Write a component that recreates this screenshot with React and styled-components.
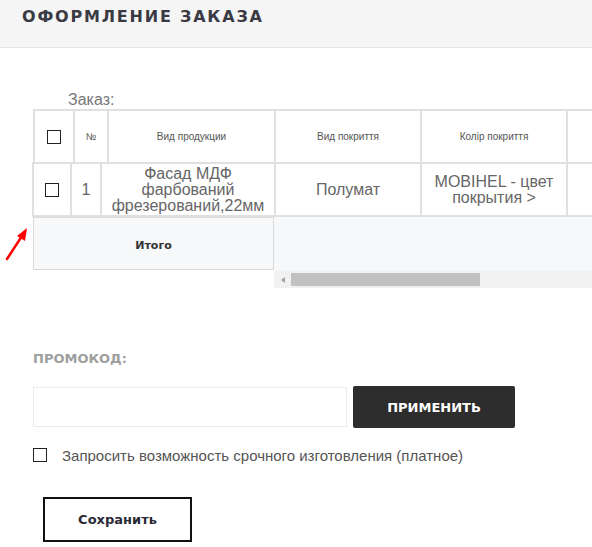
import React from "react";
import styled, { createGlobalStyle } from "styled-components";

const GlobalStyle = createGlobalStyle`
	html, body {
		margin: 0;
		padding: 0;
		background: #fff;
	}
	* {
		box-sizing: border-box;
	}
`;

const Page = styled.div`
	position: relative;
	width: 592px;
	height: 547px;
	overflow: hidden;
	font-family: "Liberation Sans", Arial, sans-serif;
`;

const PageHeader = styled.div`
	height: 48px;
	padding: 1px 22px 0;
	background: #f5f5f5;
	border-bottom: 1px solid #e6e6e6;
	display: flex;
	align-items: flex-start;
`;

const Title = styled.h1`
	margin: 0;
	font-family: "DejaVu Sans", sans-serif;
	font-weight: bold;
	font-size: 16px;
	line-height: 32px;
	letter-spacing: 1.8px;
	color: #3a3a44;
	text-transform: uppercase;
`;

const Content = styled.div`
	padding: 43px 0 0 33px;
`;

const OrderLabel = styled.div`
	margin-left: 35px;
	font-size: 16px;
	line-height: 18px;
	color: #777;
`;

const Row = styled.div`
	display: flex;
	width: max-content;
	border-left: 2px solid #e0e0e0;
	border-top: 2px solid #e0e0e0;
	${({ $body }) => $body && `
		margin-left: -1px;
		border-bottom: 2px solid #e0e0e0;
	`}
`;

const Cell = styled.div`
	width: ${({ $w }) => $w}px;
	height: 51px;
	border-right: 2px solid #e0e0e0;
	display: flex;
	align-items: center;
	justify-content: center;
	text-align: center;
	padding: 0 4px;
	color: ${({ $head }) => ($head ? "#555" : "#666")};
	font-size: ${({ $head }) => ($head ? "10px" : "16px")};
	line-height: ${({ $head }) => ($head ? "12px" : "16px")};
`;

const Box = styled.input.attrs({ type: "checkbox" })`
	appearance: none;
	margin: 0;
	width: 14px;
	height: 14px;
	border: 1px solid #222;
	background: #fff;
	flex-shrink: 0;
`;

const Footer = styled.div`
	display: flex;
	align-items: flex-start;
`;

const TotalCell = styled.div`
	width: 241px;
	height: 53px;
	padding-top: 3px;
	border: 1px solid #d9d9d9;
	background: #f7f8fa;
	display: flex;
	align-items: center;
	justify-content: center;
	font-family: "DejaVu Sans", sans-serif;
	font-weight: bold;
	font-size: 11px;
	color: #333;
`;

const ScrollArea = styled.div`
	flex: 1;
	display: flex;
	flex-direction: column;
`;

const Fill = styled.div`
	height: 54px;
	background: #f7f8fa;
`;

const Track = styled.div`
	height: 17px;
	background: #f1f1f1;
	display: flex;
	align-items: center;
`;

const ArrowButton = styled.div`
	width: 17px;
	display: flex;
	justify-content: center;
	&::before {
		content: "";
		border-top: 3.5px solid transparent;
		border-bottom: 3.5px solid transparent;
		border-right: 4px solid #a3a3a3;
	}
`;

const Thumb = styled.div`
	width: 189px;
	height: 13px;
	background: #c1c1c1;
`;

const Promo = styled.div`
	margin-top: 62px;
`;

const PromoLabel = styled.div`
	font-family: "DejaVu Sans", sans-serif;
	font-weight: bold;
	font-size: 13px;
	line-height: 18px;
	color: #9e9e9e;
`;

const PromoRow = styled.div`
	display: flex;
	align-items: center;
	gap: 6px;
	margin-top: 18px;
`;

const PromoInput = styled.input`
	width: 314px;
	height: 40px;
	border: 1px solid #eaeaea;
	outline: none;
	padding: 0 10px;
`;

const DarkButton = styled.button`
	width: 162px;
	height: 42px;
	border: none;
	border-radius: 2px;
	background: #2d2d2d;
	color: #fff;
	font-family: "DejaVu Sans", sans-serif;
	font-weight: bold;
	font-size: 13px;
`;

const CheckRow = styled.label`
	display: flex;
	align-items: center;
	gap: 15px;
	margin-top: 17px;
	height: 20px;
	font-size: 15px;
	color: #555;
`;

const SaveButton = styled.button`
	margin: 32px 0 0 10px;
	width: 149px;
	height: 45px;
	border: 2px solid #111;
	background: #fff;
	font-family: "DejaVu Sans", sans-serif;
	font-weight: bold;
	font-size: 13px;
	color: #2a2a35;
`;

const Pointer = styled.svg`
	position: absolute;
	left: 0;
	top: 222px;
`;

const headCols = [40, 34, 167, 146, 146, 120];
const bodyCols = [38, 30, 174, 146, 146, 120];

export default function App() {
	return (
		<Page>
			<GlobalStyle />
			<PageHeader>
				<Title>Оформление заказа</Title>
			</PageHeader>
			<Content>
				<OrderLabel>Заказ:</OrderLabel>
				<Row>
					<Cell $head $w={headCols[0]}><Box /></Cell>
					<Cell $head $w={headCols[1]}>№</Cell>
					<Cell $head $w={headCols[2]}>Вид продукции</Cell>
					<Cell $head $w={headCols[3]}>Вид покриття</Cell>
					<Cell $head $w={headCols[4]}>Колір покриття</Cell>
					<Cell $head $w={headCols[5]} />
				</Row>
				<Row $body>
					<Cell $w={bodyCols[0]}><Box /></Cell>
					<Cell $w={bodyCols[1]}>1</Cell>
					<Cell $w={bodyCols[2]}>Фасад МДФ фарбований фрезерований,22мм</Cell>
					<Cell $w={bodyCols[3]}>Полумат</Cell>
					<Cell $w={bodyCols[4]}>MOBIHEL - цвет покрытия &gt;</Cell>
					<Cell $w={bodyCols[5]} />
				</Row>
				<Footer>
					<TotalCell>Итого</TotalCell>
					<ScrollArea>
						<Fill />
						<Track>
							<ArrowButton />
							<Thumb />
						</Track>
					</ScrollArea>
				</Footer>
				<Promo>
					<PromoLabel>ПРОМОКОД:</PromoLabel>
					<PromoRow>
						<PromoInput />
						<DarkButton>ПРИМЕНИТЬ</DarkButton>
					</PromoRow>
					<CheckRow>
						<Box />
						Запросить возможность срочного изготовления (платное)
					</CheckRow>
				</Promo>
				<SaveButton>Сохранить</SaveButton>
			</Content>
			<Pointer width="34" height="42" viewBox="0 0 34 42">
				<line x1="7" y1="37" x2="22" y2="14" stroke="#f00" strokeWidth="2.5" strokeLinecap="round" />
				<polygon points="27,6 17,14 25,19" fill="#f00" />
			</Pointer>
		</Page>
	);
}
